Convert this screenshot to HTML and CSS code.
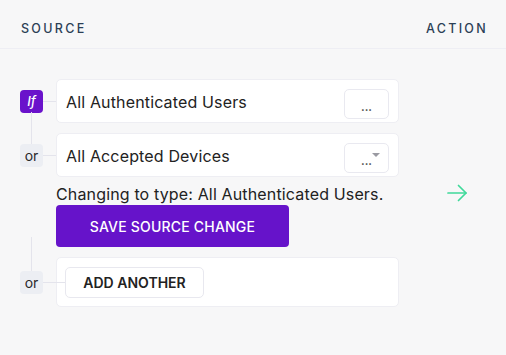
FILE: index.html
```html
<!DOCTYPE html>
<html>
<head>
<meta charset="utf-8">
<link rel="stylesheet" href="styles.css">
</head>
<body>
<div class="header">
  <span class="col-title">SOURCE</span>
  <span class="col-title">ACTION</span>
</div>
<div class="main">
  <div class="source">
    <div class="row first">
      <div class="rail"><span class="badge if">If</span></div>
      <div class="card">
        <span class="card-text">All Authenticated Users</span>
        <button class="more">...</button>
      </div>
    </div>
    <div class="row">
      <div class="rail"><span class="badge or up-short">or</span></div>
      <div class="card">
        <span class="card-text">All Accepted Devices</span>
        <button class="more drop">...</button>
      </div>
    </div>
    <div class="change">
      <p class="change-text">Changing to type: All Authenticated Users.</p>
      <button class="save">SAVE SOURCE CHANGE</button>
    </div>
    <div class="row">
      <div class="rail"><span class="badge or up-long long-link">or</span></div>
      <div class="card add-card">
        <button class="add">ADD ANOTHER</button>
      </div>
    </div>
  </div>
  <div class="action">
    <svg class="arrow" width="21" height="18" viewBox="0 0 21 18" fill="none" stroke="#3fd99a" stroke-width="1.7" stroke-linecap="round" stroke-linejoin="round">
      <path d="M1 9 H19"/>
      <path d="M11.5 1.5 L19 9 L11.5 16.5"/>
    </svg>
  </div>
</div>
</body>
</html>
```

FILE: styles.css
```css
* { box-sizing: border-box; }
html, body { margin: 0; padding: 0; }
body {
  background: #f7f7f8;
  font-family: "Inter", "Noto Sans", sans-serif;
  color: #222;
  width: 506px;
  height: 355px;
  overflow: hidden;
}
.header {
  height: 49px;
  padding: 8px 18px 0 21px;
  display: flex;
  align-items: center;
  justify-content: space-between;
  border-bottom: 1px solid #eeeef4;
}
.col-title {
  font-size: 12.5px;
  font-weight: 500;
  letter-spacing: 2.3px;
  color: #2c3f56;
}
.main {
  display: flex;
}
.source {
  width: 399px;
  padding-top: 30px;
  display: flex;
  flex-direction: column;
}
.row {
  display: flex;
  align-items: center;
  margin-top: 10px;
}
.row.first { margin-top: 0; }
.rail {
  width: 56px;
  padding-left: 20px;
  display: flex;
}
.badge {
  position: relative;
  width: 23px;
  height: 23px;
  border-radius: 4px;
  display: flex;
  align-items: center;
  justify-content: center;
  font-size: 14px;
}
.badge::after {
  content: "";
  position: absolute;
  left: 23px;
  top: 11px;
  width: 13px;
  height: 1px;
  background: #e4e4ec;
}
.badge.if {
  background: #6a12cb;
  color: #fff;
  font-style: italic;
  font-size: 13px;
  font-weight: 500;
}
.badge.or {
  background: #eceef3;
  color: #2a2a2a;
}
.badge.up-short::before,
.badge.up-long::before {
  content: "";
  position: absolute;
  left: 11px;
  width: 1px;
  background: #e4e4ec;
}
.badge.up-short::before { top: -32px; height: 32px; }
.badge.up-long::before { top: -34px; height: 34px; }
.badge.long-link::after { width: 22px; }
.card {
  flex: 1;
  height: 44px;
  background: #fff;
  border: 1px solid #eeeef3;
  border-radius: 5px;
  padding: 9px 9px 3px 9px;
  display: flex;
  align-items: center;
  justify-content: space-between;
}
.card-text {
  font-size: 16px;
  letter-spacing: 0.15px;
  padding-bottom: 5px;
  color: #222;
}
.more {
  position: relative;
  width: 45px;
  height: 30px;
  background: #fff;
  border: 1px solid #e9e9f0;
  border-radius: 5px;
  font-family: inherit;
  font-size: 11px;
  font-weight: 700;
  color: #444;
  padding: 6px 0 0 0;
  line-height: 1;
}
.more.drop::after {
  content: "";
  position: absolute;
  right: 8px;
  top: 9px;
  border-left: 4.5px solid transparent;
  border-right: 4.5px solid transparent;
  border-top: 4px solid #9a9aa2;
}
.change {
  padding-left: 56px;
  display: flex;
  flex-direction: column;
  align-items: flex-start;
}
.change-text {
  margin: 7px 0 0 0;
  font-size: 16px;
  letter-spacing: 0.15px;
  line-height: 20px;
  color: #222;
}
.save {
  margin-top: 1px;
  width: 233px;
  height: 42px;
  background: #6613ca;
  border: none;
  border-radius: 4px;
  color: #fff;
  font-family: inherit;
  font-size: 14px;
  font-weight: 500;
  letter-spacing: 0.2px;
}
.add-card {
  height: 50px;
  padding: 9px 8px;
  justify-content: flex-start;
}
.add {
  height: 31px;
  width: 139px;
  background: #fff;
  border: 1px solid #e8e8ef;
  border-radius: 5px;
  font-family: inherit;
  font-size: 14px;
  font-weight: 600;
  color: #222;
}
.action {
  flex: 1;
  display: flex;
  align-items: center;
  padding-left: 48px;
  padding-top: 30px;
}
.arrow { display: block; }
```
